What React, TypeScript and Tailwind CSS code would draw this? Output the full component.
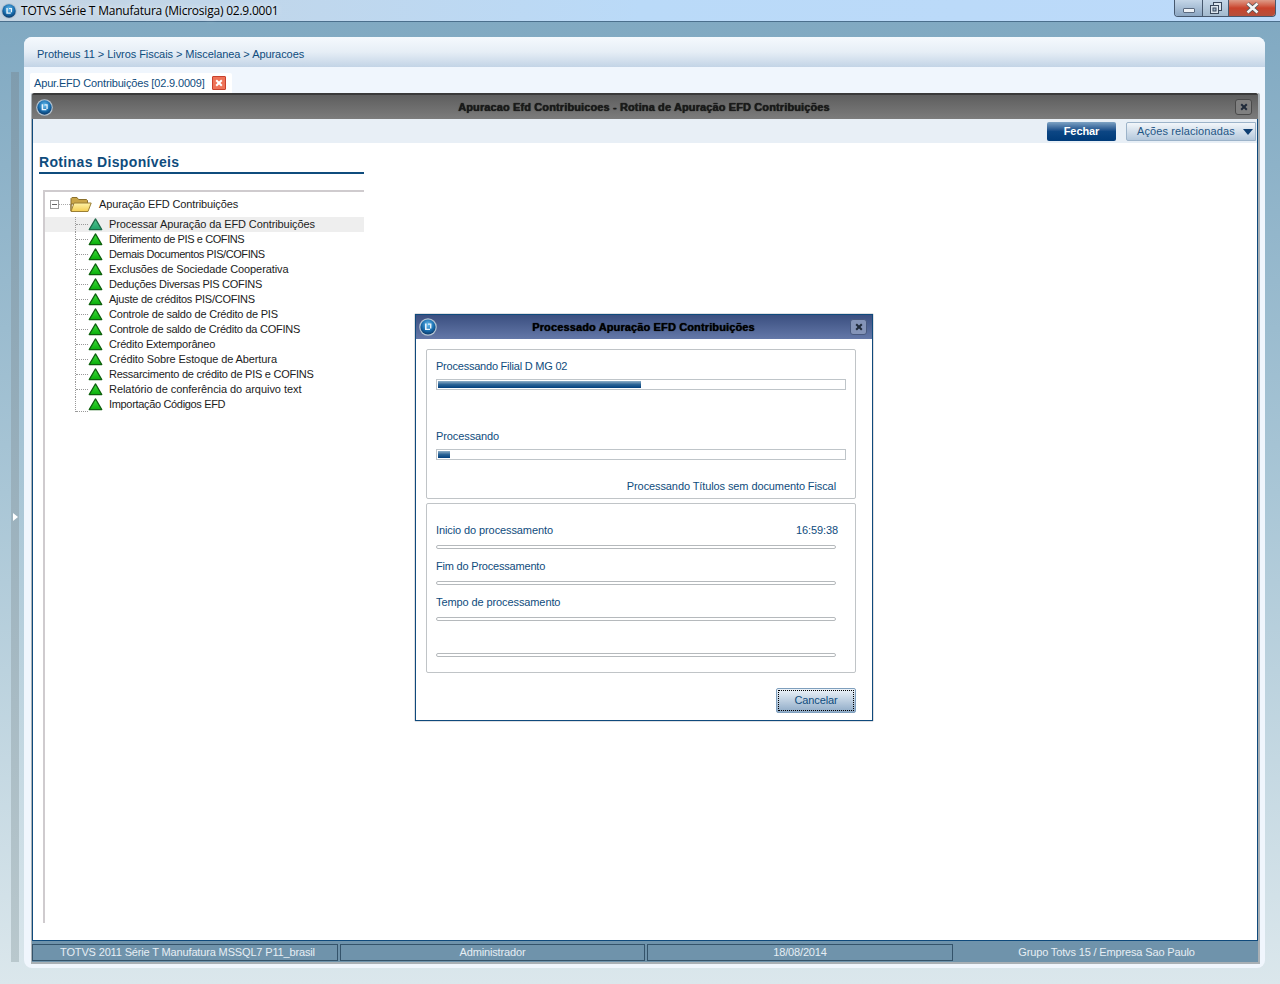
import React from "react";

const FONT = "font-['Liberation_Sans',Arial,sans-serif]";

function Globe({ size = 16 }: { size?: number }) {
  return (
    <svg width={size} height={size} viewBox="0 0 18 18" className="shrink-0">
      <defs>
        <radialGradient id="gb" cx="50%" cy="35%" r="65%">
          <stop offset="0%" stopColor="#6cc0f0" />
          <stop offset="60%" stopColor="#1a6fb0" />
          <stop offset="100%" stopColor="#0a3868" />
        </radialGradient>
      </defs>
      <circle cx="9" cy="9" r="8.8" fill="#b4c4d2" />
      <circle cx="9" cy="9" r="7.6" fill="url(#gb)" />
      <path d="M6 5.5h1.6v5.2H11V12H6z M9 5.5h3.4v5H11V6.8H9z" fill="#e8f3fb" />
    </svg>
  );
}

function Triangle({ soft }: { soft?: boolean }) {
  return (
    <svg width="15" height="14" viewBox="0 0 15 14" className="shrink-0">
      <defs>
        <linearGradient id="tri" x1="0" y1="0" x2="0" y2="1">
          <stop offset="0%" stopColor="#3fe03f" />
          <stop offset="100%" stopColor="#0aae0a" />
        </linearGradient>
        <linearGradient id="trisoft" x1="0" y1="0" x2="0" y2="1">
          <stop offset="0%" stopColor="#52c892" />
          <stop offset="100%" stopColor="#23a06c" />
        </linearGradient>
      </defs>
      <path
        d="M7.5 0.9 L13.8 11.6 H1.2 Z"
        fill={soft ? "url(#trisoft)" : "url(#tri)"}
        stroke={soft ? "#1f6a4a" : "#0d5f0d"}
        strokeWidth="1.2"
        strokeLinejoin="round"
      />
    </svg>
  );
}

function Folder() {
  return (
    <svg width="22" height="17" viewBox="0 0 22 17" className="shrink-0">
      <defs>
        <linearGradient id="fd" x1="0" y1="0" x2="0" y2="1">
          <stop offset="0%" stopColor="#fff3a8" />
          <stop offset="100%" stopColor="#f4cd52" />
        </linearGradient>
      </defs>
      <path d="M1 15V2.5L2 1.5h5l1.5 2h8l1 1V8H1z" fill="#c9a548" stroke="#8a6f2c" strokeWidth="1" />
      <path d="M1 15.5L4 7h17.2L18 15.5z" fill="url(#fd)" stroke="#9b7f34" strokeWidth="1" strokeLinejoin="round" />
    </svg>
  );
}

function CloseMini() {
  return (
    <svg width="8" height="8" viewBox="0 0 8 8">
      <path d="M1.2 1.2L6.8 6.8M6.8 1.2L1.2 6.8" stroke="#1f2a3a" strokeWidth="2" />
    </svg>
  );
}

const rows: [string, string][] = [
  ["Processar Apuração da EFD Contribuições", "tracking-[-0.1px]"],
  ["Diferimento de PIS e COFINS", "tracking-[-0.4px]"],
  ["Demais Documentos PIS/COFINS", "tracking-[-0.42px]"],
  ["Exclusões de Sociedade Cooperativa", "tracking-[-0.1px]"],
  ["Deduções Diversas PIS COFINS", "tracking-[-0.28px]"],
  ["Ajuste de créditos PIS/COFINS", "tracking-[-0.24px]"],
  ["Controle de saldo de Crédito de PIS", "tracking-[-0.21px]"],
  ["Controle de saldo de Crédito da COFINS", "tracking-[-0.23px]"],
  ["Crédito Extemporâneo", "tracking-[-0.2px]"],
  ["Crédito Sobre Estoque de Abertura", "tracking-[-0.1px]"],
  ["Ressarcimento de crédito de PIS e COFINS", "tracking-[-0.25px]"],
  ["Relatório de conferência do arquivo text", "tracking-[-0.05px]"],
  ["Importação Códigos EFD", "tracking-[-0.33px]"],
];

function Bar({ pct }: { pct: string }) {
  return (
    <div className="h-[11px] w-[410px] border border-[#bfc5c9] bg-white p-px">
      <div
        className="h-full bg-gradient-to-b from-[#8fb0c8] via-[#2a6496] to-[#003f7d]"
        style={{ width: pct }}
      />
    </div>
  );
}

function ThinRule() {
  return <div className="h-[4px] w-[400px] rounded-full border border-[#b5b9bc] bg-white" />;
}

function Dialog() {
  return (
    <div className="absolute left-[415px] top-[314px] flex h-[407px] w-[458px] flex-col border border-[#0f4a7c] bg-white shadow-[0_0_1px_#445]">
      <div className="flex h-[24px] shrink-0 items-center bg-gradient-to-b from-[#3b4f80] to-[#6478a8] pl-[3px] pr-[5px]">
        <Globe size={18} />
        <div className="flex-1 text-center text-[11px] font-bold tracking-[0.13px] text-black [text-shadow:0_0_1px_#000]">
          Processado Apuração EFD Contribuições
        </div>
        <div className="flex h-[16px] w-[17px] items-center justify-center rounded-[3px] border border-[#48597f] bg-[#8494b8]">
          <CloseMini />
        </div>
      </div>
      <div className="flex flex-1 flex-col pl-[10px] pr-[16px] pt-[10px] text-[#0f4c7d]">
        <div className="h-[150px] rounded-[2px] border border-[#c0c4c7] pl-[9px] pt-[9px]">
          <div className="h-[15px] leading-[15px] tracking-[-0.22px]">Processando Filial D MG 02</div>
          <div className="mt-[5px]"><Bar pct="50%" /></div>
          <div className="mt-[39px] h-[15px] leading-[15px]">Processando</div>
          <div className="mt-[5px]"><Bar pct="3%" /></div>
          <div className="mt-[19px] w-[400px] text-right leading-[15px]">Processando Títulos sem documento Fiscal</div>
        </div>
        <div className="mt-[4px] h-[170px] rounded-[2px] border border-[#c0c4c7] pl-[9px] pt-[19px]">
          <div className="flex h-[15px] w-[402px] justify-between leading-[15px]">
            <span>Inicio do processamento</span>
            <span>16:59:38</span>
          </div>
          <div className="mt-[7px]"><ThinRule /></div>
          <div className="mt-[10px] h-[15px] leading-[15px] tracking-[-0.2px]">Fim do Processamento</div>
          <div className="mt-[7px]"><ThinRule /></div>
          <div className="mt-[10px] h-[15px] leading-[15px]">Tempo de processamento</div>
          <div className="mt-[7px]"><ThinRule /></div>
          <div className="mt-[32px]"><ThinRule /></div>
        </div>
        <div className="mt-[15px] flex justify-end">
          <div className="flex h-[25px] w-[80px] items-center justify-center rounded-[2px] border border-[#7f9fbd] bg-gradient-to-b from-[#eef4fa] to-[#8fabc7] p-[1px]">
            <div className="flex h-full w-full items-center justify-center border border-dotted border-black leading-none text-[#0f4c7d]">
              Cancelar
            </div>
          </div>
        </div>
      </div>
    </div>
  );
}

export default function App() {
  return (
    <div className={`${FONT} relative flex h-[984px] w-[1280px] flex-col overflow-hidden bg-gradient-to-b from-[#7fa8c1] via-[#a9c6d6] to-[#dbe7ec] text-[11px] tracking-[-0.1px]`}>
      <div className="flex h-[22px] shrink-0 items-center justify-between border-b border-[#4b6f8c] bg-gradient-to-r from-[#c4d4e2] via-[#badaf8] to-[#bcdafa] pl-[1px]">
        <div className="flex items-center gap-[4px]">
          <Globe size={16} />
          <span className="font-['Open_Sans',sans-serif] text-[12px] tracking-[-0.22px] text-black [text-shadow:0_0_6px_#ffffff]">
            TOTVS Série T Manufatura (Microsiga) 02.9.0001
          </span>
        </div>
        <div className="mr-[4px] flex h-[17px] self-start overflow-hidden rounded-b-[4px] border border-t-0 border-[#46586e]">
          <div className="flex w-[28px] items-center justify-center border-r border-[#46586e] bg-gradient-to-b from-[#c4d6e8] to-[#8ba6c2]">
            <div className="mt-[4px] h-[5px] w-[12px] rounded-[1px] border border-[#5a6a80] bg-[#eef2f6]" />
          </div>
          <div className="flex w-[26px] items-center justify-center border-r border-[#46586e] bg-gradient-to-b from-[#c4d6e8] to-[#a3bace]">
            <svg width="12" height="12" viewBox="0 0 12 12">
              <rect x="3.5" y="0.5" width="8" height="8" fill="#dbe5ee" stroke="#39485c" />
              <rect x="0.5" y="3.5" width="8" height="8" fill="#dbe5ee" stroke="#39485c" />
              <rect x="3" y="6" width="3" height="3" fill="#a3bace" stroke="#39485c" />
            </svg>
          </div>
          <div className="flex w-[46px] items-center justify-center bg-gradient-to-b from-[#dd9a88] via-[#c9422c] to-[#b5503c]">
            <svg width="15" height="12" viewBox="0 0 15 12">
              <path d="M2.5 1.5L12.5 10.5M12.5 1.5L2.5 10.5" stroke="#4a4f55" strokeWidth="4" />
              <path d="M2.5 1.5L12.5 10.5M12.5 1.5L2.5 10.5" stroke="#f4f4f4" strokeWidth="2.6" />
            </svg>
          </div>
        </div>
      </div>

      <div className="flex flex-1 pt-[15px]">
        <div className="ml-[11px] mt-[35px] mb-[22px] flex w-[8px] items-center justify-center bg-gradient-to-b from-[#7f9cae] to-[#b9c8cd]">
          <div className="h-0 w-0 border-y-[4px] border-l-[5px] border-y-transparent border-l-white" />
        </div>
        <div className="ml-[5px] flex h-[931px] w-[1241px] flex-col overflow-hidden rounded-[8px] bg-[#f0f6fd]">
          <div className="flex h-[30px] shrink-0 items-center bg-gradient-to-b from-[#f5f9fd] via-[#e6eef6] to-[#c3d4e6] pl-[13px] pt-[4px] tracking-[-0.06px] text-[#0f4c7d]">
            Protheus 11 &gt; Livros Fiscais &gt; Miscelanea &gt; Apuracoes
          </div>
          <div className="h-[26px] shrink-0 pl-[6px] pt-[6px]">
            <div className="flex h-[20px] w-[202px] items-center gap-[7px] rounded-t-[2px] bg-white pl-[4px] text-[#0f4c7d]">
              <span className="whitespace-nowrap tracking-[-0.16px]">Apur.EFD Contribuições [02.9.0009]</span>
              <div className="flex h-[14px] w-[14px] shrink-0 items-center justify-center rounded-[1px] border border-[#c8402c] bg-[#ee7358]">
                <svg width="8" height="8" viewBox="0 0 8 8">
                  <path d="M1.2 1.2L6.8 6.8M6.8 1.2L1.2 6.8" stroke="#fff" strokeWidth="2" />
                </svg>
              </div>
            </div>
          </div>
          <div className="mb-[4px] ml-[7px] flex w-[1229px] flex-1 flex-col rounded-t-[2px] border-b-2 border-l border-r-2 border-[#a9b0b5] bg-white">
            <div className="flex h-[26px] shrink-0 items-center rounded-t-[2px] border-t-2 border-[#3a3a3a] bg-gradient-to-b from-[#5e5e5e] to-[#7c7c7c] pl-[4px] pr-[6px]">
              <Globe size={17} />
              <div className="flex-1 text-center text-[11px] font-bold tracking-[0.12px] text-[#1b1b1b] [text-shadow:0_0_1px_#000]">
                Apuracao Efd Contribuicoes - Rotina de Apuração EFD Contribuições
              </div>
              <div className="flex h-[16px] w-[17px] items-center justify-center rounded-[3px] border border-[#4a4a4a] bg-[#808080]">
                <CloseMini />
              </div>
            </div>
            <div className="flex flex-1 flex-col border-x border-[#0f4a7c]">
              <div className="flex h-[24px] shrink-0 items-center justify-end gap-[10px] bg-[#e8eff6] pr-px pt-[1px]">
                <div className="flex h-[19px] w-[69px] items-center justify-center rounded-[2px] bg-gradient-to-b from-[#7ea3c4] via-[#0c4684] to-[#003a78] font-bold text-white">
                  Fechar
                </div>
                <div className="flex h-[19px] w-[130px] items-center justify-between rounded-l-[2px] border border-[#9cb3c9] bg-gradient-to-b from-[#f2f6fa] to-[#b4c8dc] pl-[10px] pr-[2px] text-[#1f5685]">
                  <span className="tracking-[0.1px]">Ações relacionadas</span>
                  <div className="h-0 w-0 border-x-[5px] border-t-[6px] border-x-transparent border-t-[#0f3f73]" />
                </div>
              </div>
              <div className="flex flex-1 flex-col pl-[6px]">
                <div className="mt-[11px] h-[20px] w-[325px] border-b-2 border-[#0f4c7d] text-[14px] font-bold leading-[17px] tracking-[0.35px] text-[#0f4c7d]">
                  Rotinas Disponíveis
                </div>
                <div className="ml-[4px] mt-[16px] h-[733px] w-[321px] border-l-2 border-t-2 border-[#cfcbce] text-[#1c1c1c]">
                  <div className="flex h-[23px] items-center pl-[5px] pt-[2px]">
                    <div className="flex h-[9px] w-[9px] items-center justify-center border border-[#9a9a9a] bg-white">
                      <div className="h-px w-[5px] bg-[#666]" />
                    </div>
                    <div className="w-[11px] border-t border-dotted border-[#aaa]" />
                    <Folder />
                    <span className="ml-[7px] tracking-[-0.13px]">Apuração EFD Contribuições</span>
                  </div>
                  <div className="pt-[2px]">
                    {rows.map(([r, t], i) => (
                      <div
                        key={r}
                        className={`flex h-[15px] items-center pl-[30px] ${i === 0 ? "bg-[#eeeeee]" : ""}`}
                      >
                        <div className={`relative h-full w-[13px] shrink-0 border-l border-dotted border-[#999] ${i === rows.length - 1 ? "h-[8px] self-start" : ""}`}>
                          <div className={`absolute left-0 right-0 border-t border-dotted border-[#999] ${i === rows.length - 1 ? "bottom-0" : "top-[7px]"}`} />
                        </div>
                        <Triangle soft={i === 0} />
                        <span className={`ml-[6px] whitespace-nowrap ${t}`}>{r}</span>
                      </div>
                    ))}
                  </div>
                </div>
              </div>
            </div>
            <div className="h-px shrink-0 bg-[#0f4a7c]" />
            <div className="flex h-[21px] shrink-0 gap-[2px] bg-[#6f93ab] pb-px pt-[3px] text-[#e6eef4]">
              {[
                ["TOTVS 2011 Série T Manufatura MSSQL7 P11_brasil", "w-[306px] pl-[5px]"],
                ["Administrador", "w-[305px]"],
                ["18/08/2014", "w-[306px]"],
              ].map(([t, w]) => (
                <div key={t} className={`flex ${w} items-center justify-center border border-[#34536a] tracking-[-0.15px]`}>
                  {t}
                </div>
              ))}
              <div className="flex flex-1 items-center justify-center tracking-[-0.15px]">Grupo Totvs 15 / Empresa Sao Paulo</div>
            </div>
          </div>
        </div>
      </div>
      <Dialog />
    </div>
  );
}
